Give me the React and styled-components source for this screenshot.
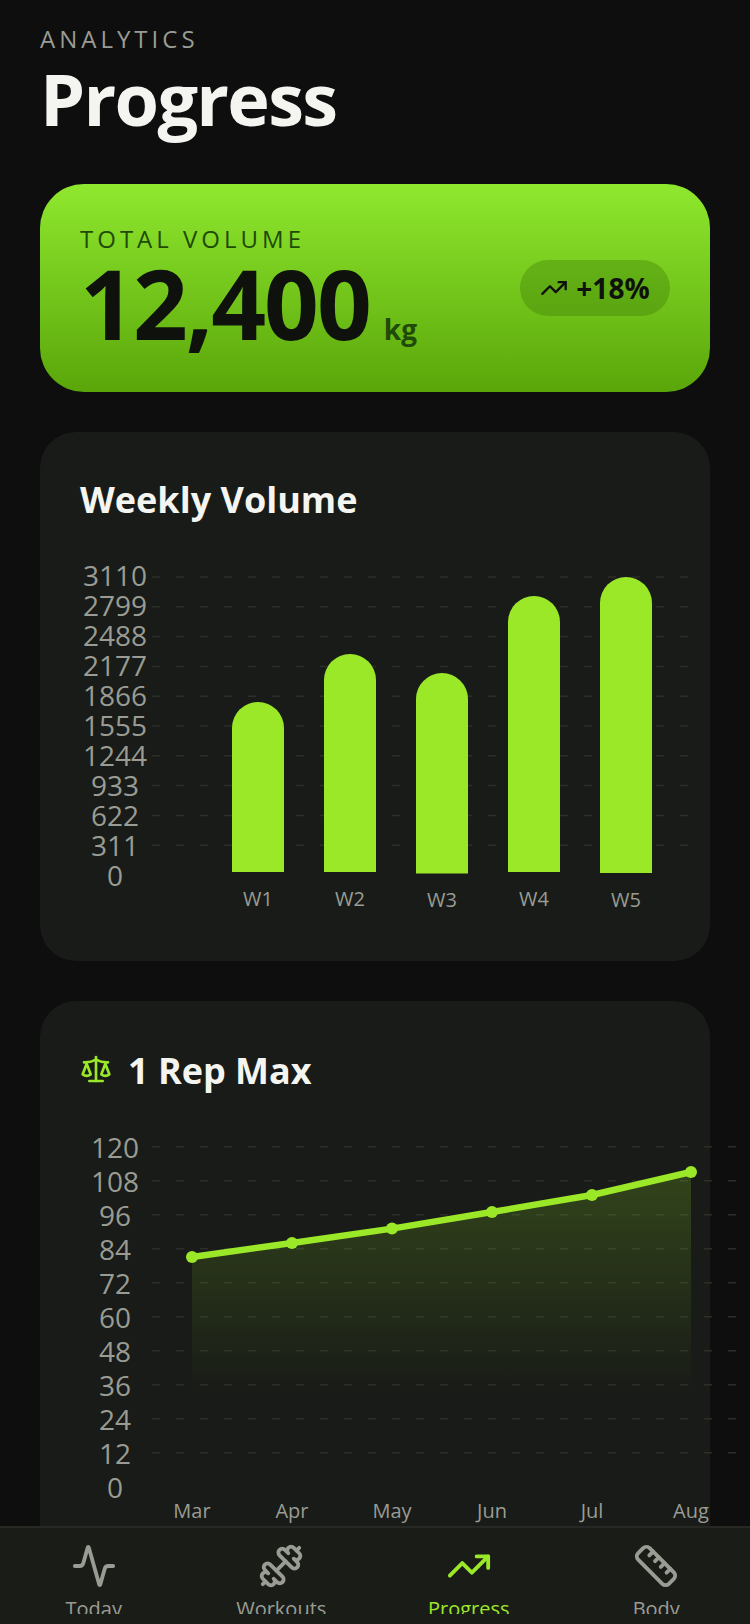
import React from 'react'
import styled, { createGlobalStyle } from 'styled-components'
import { Activity, Dumbbell, Ruler, Scale, TrendingUp } from 'lucide-react'

const LIME = '#9be829'
const GREY = '#9a9c94'

const GlobalStyle = createGlobalStyle`
  html, body { margin: 0; padding: 0; background: #0d0e0d; }
  body { font-family: "Open Sans", "Liberation Sans", sans-serif; }
`

const Screen = styled.div`
  width: 750px;
  height: 1624px;
  display: flex;
  flex-direction: column;
  overflow: hidden;
  background: #0d0e0d;
`

const Main = styled.main`
  flex: 1;
  min-height: 0;
  overflow: hidden;
  padding: 22px 40px 0;
  display: flex;
  flex-direction: column;
  gap: 40px;
`

const Header = styled.header`
  flex-shrink: 0;
  display: flex;
  flex-direction: column;
  height: 122px;
`

const Eyebrow = styled.div`
  font-size: 24px;
  line-height: 34px;
  letter-spacing: 4px;
  color: ${GREY};
`

const PageTitle = styled.h1`
  margin: 0;
  font-size: 72px;
  line-height: 84px;
  font-weight: 700;
  letter-spacing: -1.7px;
  color: #f4f5f0;
`

const Hero = styled.section`
  flex-shrink: 0;
  height: 208px;
  box-sizing: border-box;
  padding: 38px 40px;
  border-radius: 44px;
  background: linear-gradient(180deg, #8fe82e 0%, #5aa60a 100%);
  display: flex;
  align-items: center;
  justify-content: space-between;
`

const HeroLabel = styled.div`
  font-size: 24px;
  line-height: 30px;
  letter-spacing: 4px;
  color: #1f4a08;
`

const HeroValue = styled.div`
  display: flex;
  align-items: baseline;
  gap: 14px;
  font-size: 96px;
  line-height: 98px;
  font-weight: 700;
  letter-spacing: -2px;
  color: #0f110d;
`

const Unit = styled.span`
  font-size: 28px;
  line-height: 1;
  font-weight: 700;
  letter-spacing: 0;
  color: #1f4a08;
`

const Badge = styled.div`
  width: 150px;
  height: 56px;
  border-radius: 28px;
  background: rgba(58, 120, 5, 0.35);
  display: flex;
  align-items: center;
  justify-content: center;
  gap: 8px;
  font-size: 28px;
  font-weight: 700;
  color: #0f110d;
`

const Card = styled.section`
  flex-shrink: 0;
  padding: 40px;
  border-radius: 36px;
  background: #181b17;
`

const CardTitle = styled.h2`
  margin: 0 0 32px;
  display: flex;
  align-items: center;
  gap: 16px;
  font-size: 36px;
  line-height: 56px;
  font-weight: 700;
  color: #f4f5f0;
  svg { color: ${LIME}; }
`

const TitleText = styled.span`
  margin: 2px 0 -2px;
`

const ChartSvg = styled.svg`
  display: block;
  margin-left: -40px;
  overflow: visible;
`

const AxisText = styled.text`
  fill: ${GREY};
  font-family: "Open Sans", "Liberation Sans", sans-serif;
  font-size: ${(p) => p.$size}px;
  text-anchor: middle;
  dominant-baseline: central;
`

const GridLine = styled.line`
  stroke: #2b2e29;
  stroke-width: 1.5;
  stroke-dasharray: 8 16;
`

const BottomNav = styled.nav`
  flex-shrink: 0;
  height: 98px;
  box-sizing: border-box;
  padding-bottom: 10px;
  border-top: 2px solid #252823;
  background: #1a1c18;
  display: flex;
`

const NavItem = styled.div`
  flex: 1;
  height: 100%;
  box-sizing: border-box;
  padding-top: 15px;
  overflow: hidden;
  display: flex;
  flex-direction: column;
  align-items: center;
  gap: 5px;
  font-size: 20px;
  line-height: 30px;
  color: ${(p) => (p.$active ? LIME : GREY)};
  svg { flex-shrink: 0; }
`

const weeks = [
  { label: 'W1', x: 218, top: 142, bottom: 312, labelY: 338 },
  { label: 'W2', x: 310, top: 94, bottom: 312, labelY: 338 },
  { label: 'W3', x: 402, top: 113, bottom: 313.5, labelY: 339 },
  { label: 'W4', x: 494, top: 36, bottom: 312, labelY: 338 },
  { label: 'W5', x: 586, top: 17, bottom: 313, labelY: 339 },
]

const volumeTicks = [3110, 2799, 2488, 2177, 1866, 1555, 1244, 933, 622, 311, 0]
const maxTicks = [120, 108, 96, 84, 72, 60, 48, 36, 24, 12, 0]

const maxPoints = [
  { label: 'Mar', x: 152, y: 128 },
  { label: 'Apr', x: 252, y: 114 },
  { label: 'May', x: 352, y: 99.6 },
  { label: 'Jun', x: 452, y: 83 },
  { label: 'Jul', x: 552, y: 66 },
  { label: 'Aug', x: 651, y: 43 },
]

const barPath = ({ x, top, bottom }) => {
  const r = 26
  return `M${x - r} ${bottom}V${top + r}A${r} ${r} 0 0 1 ${x + r} ${top + r}V${bottom}Z`
}

const WeeklyChart = () => (
  <ChartSvg width="670" height="361">
    {volumeTicks.map((tick, i) => {
      const y = 17 + i * 29.8
      return (
        <g key={tick}>
          {tick !== 0 && <GridLine x1="112" x2="648" y1={y} y2={y} />}
          <AxisText $size={28} x="75" y={15 + i * 30}>{tick}</AxisText>
        </g>
      )
    })}
    {weeks.map((w) => (
      <g key={w.label}>
        <path d={barPath(w)} fill={LIME} />
        <AxisText $size={20} x={w.x} y={w.labelY}>{w.label}</AxisText>
      </g>
    ))}
  </ChartSvg>
)

const MaxChart = () => {
  const line = maxPoints.map((p) => `${p.x},${p.y}`).join(' ')
  const first = maxPoints[0]
  const last = maxPoints[maxPoints.length - 1]
  return (
    <ChartSvg width="670" height="400">
      <defs>
        <linearGradient id="maxFill" x1="0" y1="43" x2="0" y2="265" gradientUnits="userSpaceOnUse">
          <stop offset="0" stopColor={LIME} stopOpacity="0.2" />
          <stop offset="1" stopColor={LIME} stopOpacity="0" />
        </linearGradient>
      </defs>
      {maxTicks.map((tick, i) => {
        const y = 17.7 + i * 34
        return (
          <g key={tick}>
            {tick !== 0 && <GridLine x1="112" x2="697" y1={y} y2={y} />}
            <AxisText $size={28} x="75" y={y}>{tick}</AxisText>
          </g>
        )
      })}
      <polygon points={`${first.x},265 ${line} ${last.x},265`} fill="url(#maxFill)" />
      <polyline points={line} fill="none" stroke={LIME} strokeWidth="6.5" strokeLinejoin="round" />
      {maxPoints.map((p) => (
        <g key={p.label}>
          <circle cx={p.x} cy={p.y} r="6" fill={LIME} />
          <AxisText $size={20} x={p.x} y="381">{p.label}</AxisText>
        </g>
      ))}
    </ChartSvg>
  )
}

const navItems = [
  { label: 'Today', Icon: Activity },
  { label: 'Workouts', Icon: Dumbbell },
  { label: 'Progress', Icon: TrendingUp, active: true },
  { label: 'Body', Icon: Ruler },
]

export default function App() {
  return (
    <Screen>
      <GlobalStyle />
      <Main>
        <Header>
          <Eyebrow>ANALYTICS</Eyebrow>
          <PageTitle>Progress</PageTitle>
        </Header>

        <Hero>
          <div>
            <HeroLabel>TOTAL VOLUME</HeroLabel>
            <HeroValue>12,400 <Unit>kg</Unit></HeroValue>
          </div>
          <Badge><TrendingUp size={28} />+18%</Badge>
        </Hero>

        <Card>
          <CardTitle>Weekly Volume</CardTitle>
          <WeeklyChart />
        </Card>

        <Card>
          <CardTitle><Scale size={32} /><TitleText>1 Rep Max</TitleText></CardTitle>
          <MaxChart />
        </Card>
      </Main>

      <BottomNav>
        {navItems.map(({ label, Icon, active }) => (
          <NavItem key={label} $active={active}>
            <Icon size={46} />
            <span>{label}</span>
          </NavItem>
        ))}
      </BottomNav>
    </Screen>
  )
}
